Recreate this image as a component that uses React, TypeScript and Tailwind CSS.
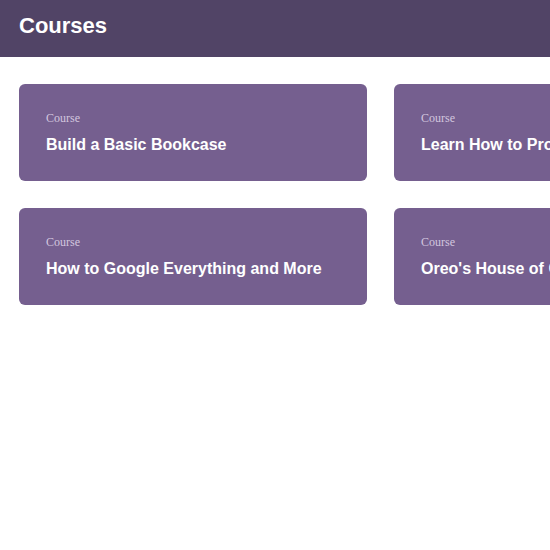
const courses = [
  "Build a Basic Bookcase",
  "Learn How to Program",
  "How to Google Everything and More",
  "Oreo's House of Cookies",
];

export default function App() {
  return (
    <div className="w-[550px] h-[550px] overflow-hidden bg-white font-['Liberation_Sans',Arial,sans-serif]">
      <header className="h-[57px] bg-[#514466] px-[19px] pt-[13px]">
        <h1 className="text-white text-[22px] leading-[26px] font-bold">Courses</h1>
      </header>
      <div className="grid grid-cols-[348px_348px] gap-[27px] px-[19px] pt-[27px] w-max">
        {courses.map((c) => (
          <div key={c} className="bg-[#755f8f] rounded-[6px] h-[97px] px-[27px] pt-[27px] flex flex-col gap-[10px]">
            <div className="text-[12px] leading-[14px] text-[#d3c6df] font-['Liberation_Serif',serif]">Course</div>
            <div className="text-white text-[16px] leading-[20px] font-bold whitespace-nowrap">{c}</div>
          </div>
        ))}
      </div>
    </div>
  );
}
